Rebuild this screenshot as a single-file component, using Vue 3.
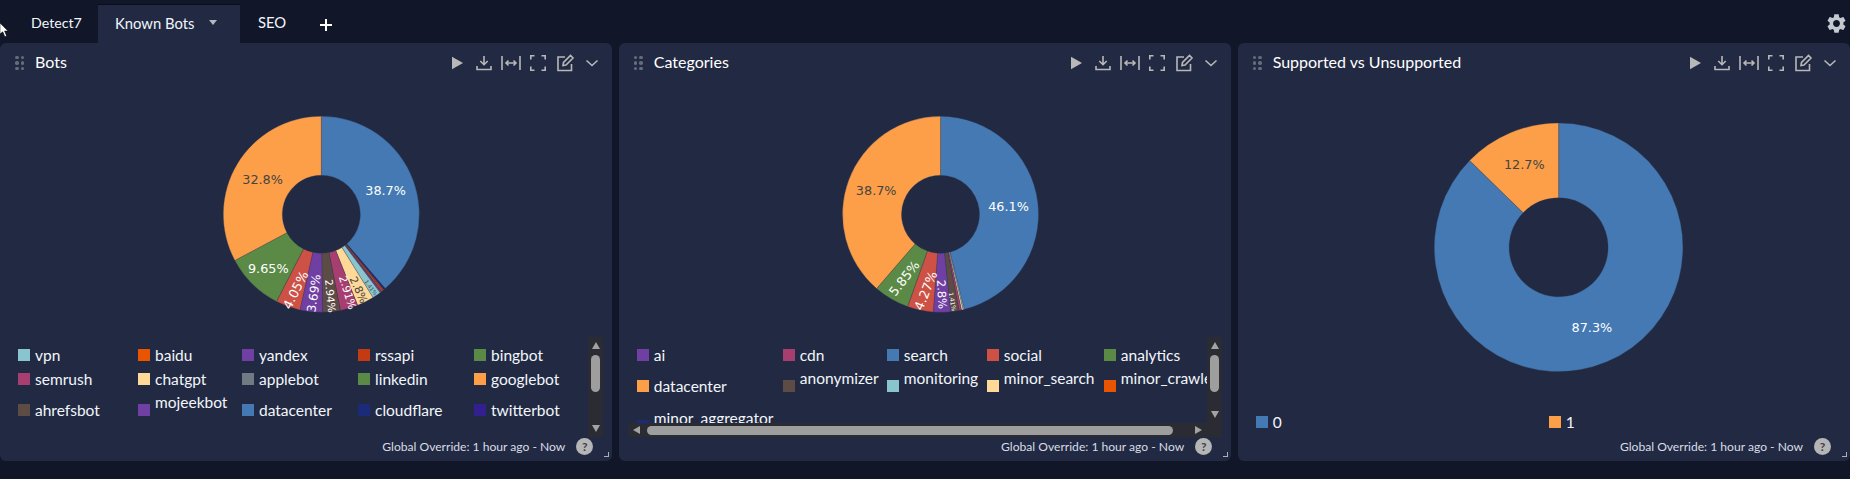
<script setup>
const BLUE = '#4479b3'
const ORANGE = '#fd9f48'
const GREEN = '#5b8a46'
const RED = '#cd5145'
const PURPLE = '#6f3fa3'
const BROWN = '#5d4b46'
const PINK = '#a63e70'
const CREAM = '#ffd998'
const TEAL = '#88c5cf'
const DARK = '#444444'
const WHITE = '#ffffff'

const arc = (cx, cy, R, r, from, to) => {
  const pt = (rad, pct) => {
    const a = (pct / 100) * Math.PI * 2
    return `${(cx + rad * Math.sin(a)).toFixed(2)} ${(cy - rad * Math.cos(a)).toFixed(2)}`
  }
  const large = to - from > 50 ? 1 : 0
  return `M${pt(R, from)}A${R} ${R} 0 ${large} 1 ${pt(R, to)}L${pt(r, to)}A${r} ${r} 0 ${large} 0 ${pt(r, from)}Z`
}

const makeSlices = (list, cx, cy, R, r) => {
  let at = 0
  return list.map(([value, color]) => {
    const d = arc(cx, cy, R, r, at, at + value)
    at += value
    return { d, color }
  })
}

const panels = [
  {
    title: 'Bots',
    variant: 'bots',
    cx: 321.3, cy: 131.3,
    slices: makeSlices([
      [38.7, BLUE], [0.3, '#1c2a7a'], [0.2, '#c23b12'], [0.2, '#e85400'], [0.15, PURPLE], [0.2, PINK],
      [1.41, TEAL], [2.8, CREAM], [2.91, PINK], [2.94, BROWN], [3.69, PURPLE], [4.05, RED],
      [9.65, GREEN], [32.8, ORANGE]
    ], 321.3, 131.3, 98, 39),
    labels: [
      { t: '38.7%', dx: 64.3, dy: -23.7, rot: 0, size: 12.8, fill: WHITE },
      { t: '32.8%', dx: -58.7, dy: -35, rot: 0, size: 12.8, fill: DARK },
      { t: '9.65%', dx: -53, dy: 54.3, rot: 0, size: 12.8, fill: WHITE },
      { t: '4.05%', dx: -25.7, dy: 75.7, rot: -63, size: 12.8, fill: WHITE },
      { t: '3.69%', dx: -7.3, dy: 79, rot: -82, size: 12, fill: WHITE },
      { t: '2.94%', dx: 9.3, dy: 81.7, rot: 84, size: 10.5, fill: WHITE },
      { t: '2.91%', dx: 26, dy: 78.3, rot: 73, size: 11, fill: WHITE },
      { t: '2.8%', dx: 37, dy: 75.7, rot: 65, size: 11, fill: DARK },
      { t: '1.41%', dx: 49.7, dy: 73.3, rot: 55, size: 5.5, fill: DARK }
    ],
    rows: [
      [['vpn', TEAL], ['baidu', '#e85400'], ['yandex', PURPLE], ['rssapi', '#c23b12'], ['bingbot', GREEN]],
      [['semrush', PINK], ['chatgpt', CREAM], ['applebot', '#6f7b82'], ['linkedin', GREEN], ['googlebot', ORANGE]],
      [['ahrefsbot', BROWN], ['mojeekbot', PURPLE, true], ['datacenter', BLUE], ['cloudflare', '#1c2a7a'], ['twitterbot', '#33208f']],
      [['', 'transparent'], ['amazonbot', 'transparent', true], ['', 'transparent'], ['metabot', 'transparent', true], ['', 'transparent']]
    ],
    hbar: false
  },
  {
    title: 'Categories',
    variant: 'cats',
    cx: 321.5, cy: 131.3,
    slices: makeSlices([
      [46.1, BLUE], [0.2, TEAL], [0.27, CREAM], [0.4, PINK], [1.41, BROWN], [2.8, PURPLE], [4.27, RED],
      [5.85, GREEN], [38.7, ORANGE]
    ], 321.5, 131.3, 98, 39),
    labels: [
      { t: '46.1%', dx: 68, dy: -7.7, rot: 0, size: 12.8, fill: WHITE },
      { t: '38.7%', dx: -64.3, dy: -24, rot: 0, size: 12.8, fill: DARK },
      { t: '5.85%', dx: -36.3, dy: 64, rot: -52, size: 12.8, fill: WHITE },
      { t: '4.27%', dx: -14.7, dy: 76.3, rot: -68, size: 12.8, fill: WHITE },
      { t: '2.8%', dx: 1.3, dy: 80, rot: 87, size: 11.5, fill: WHITE },
      { t: '1.41%', dx: 12.3, dy: 87.3, rot: 80, size: 6, fill: WHITE }
    ],
    rows: [
      [['ai', PURPLE], ['cdn', PINK], ['search', BLUE], ['social', RED], ['analytics', GREEN]],
      [['datacenter', ORANGE], ['anonymizer', BROWN, true], ['monitoring', TEAL, true], ['minor_search', CREAM, true], ['minor_crawler', '#e85400', true]],
      [['minor_aggregator', '#1c2a7a', true]]
    ],
    hbar: true
  },
  {
    title: 'Supported vs Unsupported',
    variant: 'support',
    cx: 320.6, cy: 164.3,
    slices: makeSlices([[87.3, BLUE], [12.7, ORANGE]], 320.6, 164.3, 124.3, 49.5),
    labels: [
      { t: '87.3%', dx: 33.3, dy: 80, rot: 0, size: 12.8, fill: WHITE },
      { t: '12.7%', dx: -34.3, dy: -83, rot: 0, size: 12.8, fill: DARK }
    ],
    rows: [[['0', BLUE], ['1', ORANGE]]],
    hbar: false
  }
]
</script>

<template>
  <div class="page">
    <nav class="tabs">
      <div class="tab first">Detect7</div>
      <div class="tab active">Known Bots <span class="caret"></span></div>
      <div class="tab">SEO</div>
      <svg class="plus" width="12" height="12" viewBox="0 0 12 12"><path d="M6 0v12M0 6h12" stroke="#fff" stroke-width="2" /></svg>
      <svg class="gear" width="23" height="23" viewBox="0 0 24 24"><path fill="#c4c8cf" d="M19.14 12.94c.04-.3.06-.61.06-.94 0-.32-.02-.64-.07-.94l2.03-1.58c.18-.14.23-.41.12-.61l-1.92-3.32c-.12-.22-.37-.29-.59-.22l-2.39.96c-.5-.38-1.03-.7-1.62-.94l-.36-2.54c-.04-.24-.24-.41-.48-.41h-3.84c-.24 0-.43.17-.47.41l-.36 2.54c-.59.24-1.13.57-1.62.94l-2.39-.96c-.22-.08-.47 0-.59.22L2.74 8.87c-.12.21-.08.47.12.61l2.03 1.58c-.05.3-.09.63-.09.94s.02.64.07.94l-2.03 1.58c-.18.14-.23.41-.12.61l1.92 3.32c.12.22.37.29.59.22l2.39-.96c.5.38 1.03.7 1.62.94l.36 2.54c.05.24.24.41.48.41h3.84c.24 0 .44-.17.47-.41l.36-2.54c.59-.24 1.13-.56 1.62-.94l2.39.96c.22.08.47 0 .59-.22l1.92-3.32c.12-.22.07-.47-.12-.61l-2.01-1.58zM12 15.6c-1.98 0-3.6-1.62-3.6-3.6s1.62-3.6 3.6-3.6 3.6 1.62 3.6 3.6-1.62 3.6-3.6 3.6z" /></svg>
    </nav>

    <main class="grid">
      <section v-for="p in panels" :key="p.title" class="panel" :class="p.variant">
        <header class="head">
          <span class="grip"><i v-for="n in 6" :key="n"></i></span>
          <span class="title">{{ p.title }}</span>
          <div class="tools">
            <svg viewBox="0 0 20 20"><path d="M5 3.8l11 6.2-11 6.2z" fill="#b8b8b8" /></svg>
            <svg viewBox="0 0 20 20"><path d="M10 3v8.5M6.3 8l3.7 3.7L13.7 8M3 13v3.5h14V13" /></svg>
            <svg viewBox="0 0 20 20"><path d="M1 3v14M19 3v14M5 10h10M7.5 7.5L5 10l2.5 2.5M12.5 7.5L15 10l-2.5 2.5" /></svg>
            <svg viewBox="0 0 20 20"><path d="M2.8 6.5V2.8h3.7M13.5 2.8h3.7v3.7M17.2 13.5v3.7h-3.7M6.5 17.2H2.8v-3.7" /></svg>
            <svg viewBox="0 0 20 20"><path d="M10 4H3v13.5h13.5V11M8 12.5l.5-3L15.5 2.5 18 5l-7 7z" /></svg>
            <svg viewBox="0 0 20 20"><path d="M4.5 7.5l5.5 5 5.5-5" /></svg>
          </div>
        </header>

        <svg class="chart">
          <path v-for="(s, i) in p.slices" :key="i" :d="s.d" :fill="s.color" stroke="#2f3a55" stroke-width="0.3" />
          <text
            v-for="l in p.labels"
            :key="l.t"
            class="pct"
            :transform="`translate(${p.cx + l.dx} ${p.cy + l.dy}) rotate(${l.rot})`"
            :font-size="l.size"
            :fill="l.fill"
          >{{ l.t }}</text>
        </svg>

        <div class="legend-wrap">
          <div class="legend-top">
            <div class="legend">
              <div v-for="(row, r) in p.rows" :key="r" class="row">
                <div v-for="(item, c) in row" :key="c" class="item" :class="{ raised: item[2] }">
                  <span class="swatch" :style="{ background: item[1] }"></span>
                  <span class="name">{{ item[0] }}</span>
                </div>
              </div>
            </div>
            <div v-if="p.variant !== 'support'" class="vbar">
              <span class="arrow up"></span>
              <span class="vthumb"></span>
              <span class="arrow down"></span>
            </div>
          </div>
          <div v-if="p.hbar" class="hbar">
            <span class="arrow left"></span>
            <span class="hthumb"></span>
            <span class="arrow right"></span>
          </div>
        </div>

        <footer class="foot">
          <span>Global Override: 1 hour ago - Now</span>
          <span class="help">?</span>
        </footer>
        <span class="resize"></span>
      </section>
    </main>

    <svg class="cursor" width="10" height="15" viewBox="0 0 10 15"><path d="M0 0l8 8H4.6l2 5-1.8.8-2-5L0 11z" fill="#fff" stroke="#000" stroke-width="0.5" /></svg>
  </div>
</template>

<style>
html, body { margin: 0; background: #111729; }
</style>

<style scoped>
.page {
  position: relative;
  width: 1850px;
  height: 479px;
  overflow: hidden;
  background: #111729;
  font-family: Lato, "Noto Sans", sans-serif;
  color: #f2f6fb;
}

.tabs {
  display: flex;
  align-items: flex-end;
  height: 43px;
}

.tab {
  height: 39px;
  box-sizing: border-box;
  padding: 0 18px 3px;
  display: flex;
  align-items: center;
  font-size: 14.8px;
  white-space: pre;
}

.tab.first {
  width: 98px;
  padding: 0 0 3px 31px;
  font-size: 14.2px;
}

.tab.active {
  width: 142px;
  padding: 0 0 3px 17px;
  background: #222a43;
  border-top: 1px solid #0a0e1c;
  gap: 11px;
}

.caret {
  width: 0;
  height: 0;
  border-left: 4.5px solid transparent;
  border-right: 4.5px solid transparent;
  border-top: 5px solid #b5b8bf;
}

.plus { margin: 0 0 12px 16px; }
.gear { margin: 0 2px 8px auto; }

.grid {
  display: grid;
  grid-template-columns: repeat(3, 1fr);
  column-gap: 6.5px;
}

.panel {
  position: relative;
  height: 418px;
  display: flex;
  flex-direction: column;
  background: #222a43;
  border-radius: 6px;
}

.head {
  display: flex;
  align-items: center;
  height: 40px;
  flex: none;
  padding: 0 10px 0 15px;
}

.grip {
  display: grid;
  grid-template-columns: repeat(2, 3.5px);
  grid-auto-rows: 3.5px;
  gap: 2px;
}

.grip i {
  border-radius: 50%;
  background: #666c7c;
}

.title {
  margin-left: 11px;
  padding-bottom: 3px;
  font-size: 16px;
  color: #fff;
}

.tools {
  margin-left: auto;
  display: flex;
  gap: 7px;
}

.tools svg {
  width: 20px;
  height: 20px;
  fill: none;
  stroke: #b8b8b8;
  stroke-width: 1.6;
}

.tools svg:first-child { stroke: none; }

.chart {
  display: block;
  flex: 1;
  min-height: 0;
  width: 100%;
}

.pct {
  font-family: "DejaVu Sans", sans-serif;
  text-anchor: middle;
  dominant-baseline: central;
}

.legend-wrap {
  flex: none;
  margin: 0 9px;
  height: 100px;
  display: flex;
  flex-direction: column;
}

.support .legend-wrap { height: 23px; }

.legend-top {
  flex: 1;
  min-height: 0;
  display: flex;
}

.legend {
  flex: 1;
  min-width: 0;
  overflow: hidden;
  padding: 10px 0 0 9px;
  font-size: 15.5px;
}

.support .legend { padding-top: 0; }

.row {
  display: grid;
  grid-template-columns: 120px 104px 116px 116px 1fr;
  align-items: center;
  height: 16px;
  margin-bottom: 8px;
}

.row:nth-child(n + 3) { height: 32px; }

.cats .row { grid-template-columns: 146px 104px 100px 117px 1fr; }
.cats .row:nth-child(n + 2) { height: 32px; }
.support .row { grid-template-columns: 293px 1fr; }

.item {
  display: flex;
  align-items: center;
  min-width: 0;
  height: 100%;
  white-space: nowrap;
}

.swatch {
  flex: none;
  width: 12px;
  height: 12px;
  margin-right: 5px;
  margin-top: -2px;
}

.name {
  line-height: 16px;
  margin-bottom: 2px;
}

.raised .name {
  align-self: flex-start;
  margin-top: -1px;
}

.vbar {
  flex: none;
  width: 15px;
  margin-left: 0;
  background: #2b2c33;
  display: flex;
  flex-direction: column;
  align-items: center;
  justify-content: space-between;
  padding: 5px 0;
  box-sizing: border-box;
  position: relative;
}

.vthumb {
  position: absolute;
  top: 18px;
  left: 3px;
  width: 9px;
  height: 37px;
  border-radius: 5px;
  background: #9e9e9e;
}

.hbar {
  flex: none;
  height: 14px;
  background: #2b2c33;
  display: flex;
  align-items: center;
  padding: 0 20px 0 5px;
  position: relative;
}

.hthumb {
  margin-left: 7px;
  width: 526px;
  height: 9px;
  border-radius: 5px;
  background: #9e9e9e;
}

.hbar .right { margin-left: 22px; }

.arrow {
  width: 0;
  height: 0;
  display: block;
}

.arrow.up {
  border-left: 4.5px solid transparent;
  border-right: 4.5px solid transparent;
  border-bottom: 7px solid #a3a3a3;
}

.arrow.down {
  border-left: 4.5px solid transparent;
  border-right: 4.5px solid transparent;
  border-top: 7px solid #a3a3a3;
}

.arrow.left {
  border-top: 4.5px solid transparent;
  border-bottom: 4.5px solid transparent;
  border-right: 7px solid #a3a3a3;
}

.arrow.right {
  border-top: 4.5px solid transparent;
  border-bottom: 4.5px solid transparent;
  border-left: 7px solid #a3a3a3;
}

.foot {
  flex: none;
  height: 24px;
  display: flex;
  align-items: center;
  justify-content: flex-end;
  gap: 11px;
  padding: 0 19px 6px 0;
  box-sizing: border-box;
  font-size: 12.1px;
  color: #d8dde6;
}

.help {
  width: 17px;
  height: 17px;
  border-radius: 50%;
  background: #b5b5b5;
  color: #3a3f4e;
  font-size: 12px;
  font-weight: 700;
  text-align: center;
  line-height: 17px;
}

.resize {
  position: absolute;
  right: 3px;
  bottom: 4px;
  width: 4px;
  height: 4px;
  border-right: 1.5px solid #aab0bb;
  border-bottom: 1.5px solid #aab0bb;
}

.cursor {
  position: absolute;
  left: 0;
  top: 23px;
}
</style>
